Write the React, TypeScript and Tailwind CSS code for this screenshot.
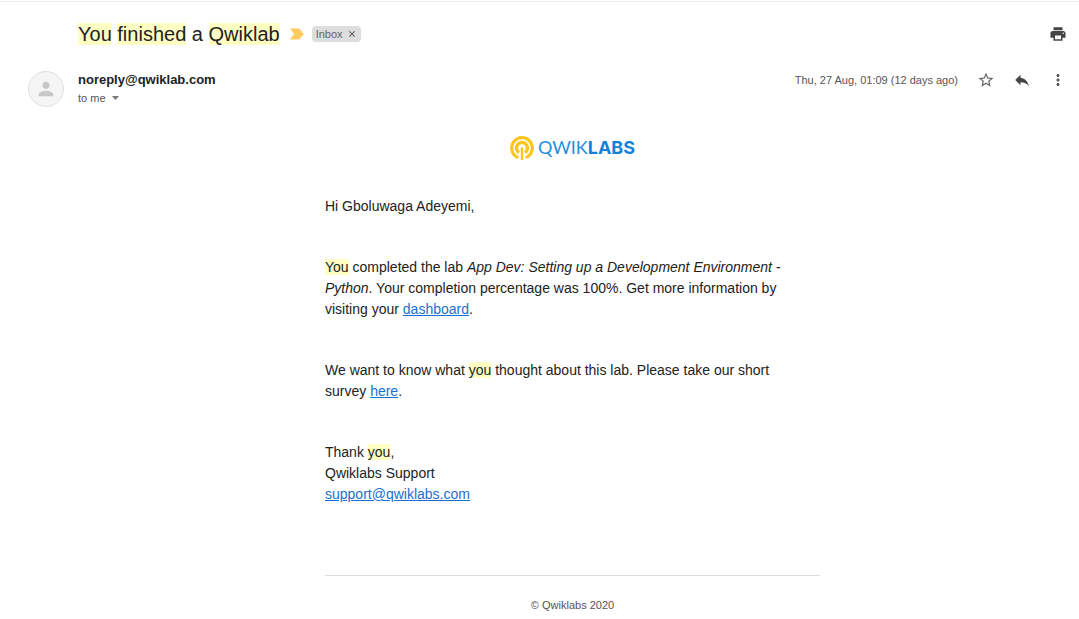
import type { ReactNode } from "react";
import { MdClose, MdMoreVert, MdPerson, MdPrint, MdReply, MdStarBorder } from "react-icons/md";

function Mark({ children }: { children: ReactNode }) {
  return <mark className="bg-[#ffffc4] text-inherit">{children}</mark>;
}

function BodyLink({ href, children }: { href: string; children: ReactNode }) {
  return (
    <a href={href} className="text-[#1a6fd0] underline">
      {children}
    </a>
  );
}

function IconButton({ label, children }: { label: string; children: ReactNode }) {
  return (
    <button type="button" aria-label={label} className="flex size-5 items-center justify-center">
      {children}
    </button>
  );
}

function Logo() {
  return (
    <div className="flex items-center justify-center gap-1">
      <svg viewBox="0 0 24 24" className="size-6" fill="none" stroke="#fbc61c" aria-hidden="true">
        <path d="M8.3 21.6A10.3 10.3 0 1 1 15.7 21.6" strokeWidth="3.2" />
        <path d="M9 16.6A5.5 5.5 0 1 1 15 16.6" strokeWidth="3.4" />
        <path d="M12 12.5V24" strokeWidth="2.4" strokeLinecap="round" />
      </svg>
      <span className="font-['Lato',sans-serif] text-lg leading-6 text-[#1f8fe0]">
        QWIK<span className="font-['Inter',sans-serif] font-bold text-[#1481d8]">LABS</span>
      </span>
    </div>
  );
}

export default function App() {
  return (
    <main className="mt-px border-t border-[#ececec] bg-white pr-[11px] pl-7 font-['Liberation_Sans',Arial,sans-serif] text-[#222222]">
      <header className="flex h-16 items-center justify-between pl-[50px]">
        <div className="flex items-center">
          <h1 className="text-xl leading-6">
            <Mark>You</Mark> <Mark>finished</Mark> a <Mark>Qwiklab</Mark>
          </h1>
          <svg viewBox="0 0 14 12" className="ml-2.5 h-3 w-3.5" aria-label="Important" role="img">
            <path d="M0 0.5H9L14 6L9 11.5H0L4 6Z" fill="#fdcb5f" />
          </svg>
          <div className="ml-2 flex h-4 items-center gap-1 rounded-sm bg-[#dddddd] px-1 text-[11px] text-[#666666]">
            <span>Inbox</span>
            <button type="button" aria-label="Remove label Inbox">
              <MdClose size={10} color="#444444" />
            </button>
          </div>
        </div>
        <IconButton label="Print">
          <MdPrint size={18} color="#444444" />
        </IconButton>
      </header>

      <section className="flex items-start pt-1">
        <div className="mt-px flex size-9 shrink-0 items-center justify-center rounded-full border border-[#e0e0e0] bg-[#f5f5f5]">
          <MdPerson size={22} color="#c8c8c8" />
        </div>
        <div className="ml-3.5 flex-1">
          <div className="text-[13px] leading-5 font-bold">noreply@qwiklab.com</div>
          <button type="button" className="flex items-center gap-1.5 text-[11px] leading-4 text-[#555555]">
            to me
            <svg viewBox="0 0 7 4" className="h-1 w-[7px]" fill="#777777" aria-hidden="true">
              <path d="M0 0H7L3.5 4Z" />
            </svg>
          </button>
        </div>
        <div className="flex h-5 items-center gap-4">
          <time className="mr-0.5 text-[11px] text-[#555555]">Thu, 27 Aug, 01:09 (12 days ago)</time>
          <IconButton label="Star">
            <MdStarBorder size={18} color="#666666" />
          </IconButton>
          <IconButton label="Reply">
            <MdReply size={18} color="#444444" />
          </IconButton>
          <IconButton label="More">
            <MdMoreVert size={18} color="#555555" />
          </IconButton>
        </div>
      </section>

      <article className="pt-7 pl-[49px]">
        <div className="mx-auto max-w-[495px]">
          <Logo />
          <div className="mt-9 flex flex-col gap-10 pr-5 text-sm leading-[21px]">
            <p>Hi Gboluwaga Adeyemi,</p>
            <p>
              <Mark>You</Mark> completed the lab{" "}
              <em>App Dev: Setting up a Development Environment - Python</em>. Your completion percentage
              was 100%. Get more information by visiting your <BodyLink href="#dashboard">dashboard</BodyLink>.
            </p>
            <p>
              We want to know what <Mark>you</Mark> thought about this lab. Please take our short survey{" "}
              <BodyLink href="#survey">here</BodyLink>.
            </p>
            <p>
              Thank <Mark>you</Mark>,<br />
              Qwiklabs Support
              <br />
              <BodyLink href="mailto:support@qwiklabs.com">support@qwiklabs.com</BodyLink>
            </p>
          </div>
          <footer className="mt-[70px] border-t border-[#dddddd] pt-[19px] text-center text-[11px] leading-5 text-[#555555]">
            © Qwiklabs 2020
          </footer>
        </div>
      </article>
    </main>
  );
}
